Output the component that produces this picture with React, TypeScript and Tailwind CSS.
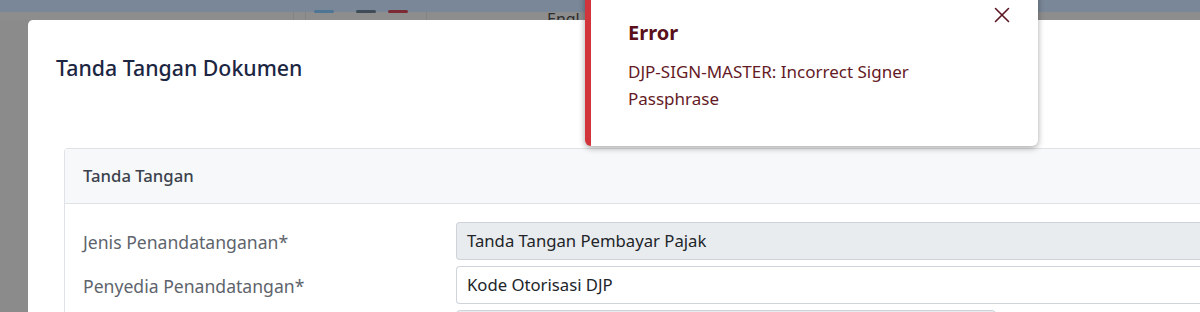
import React from 'react';

const font = { fontFamily: '"Noto Sans", "Open Sans", sans-serif' };

function FormRow({ label, value, disabled }: { label: string; value: string; disabled?: boolean }) {
  return (
    <div className="flex items-center">
      <label className="w-[373px] shrink-0 pt-[3px] text-[17.6px] text-[#5e646c]">{label}</label>
      <div
        className={`flex h-[38px] flex-1 items-center rounded-l-[4px] border border-r-0 border-[#ced4da] pl-[10px] text-[16.7px] text-[#212529] ${
          disabled ? 'bg-[#e9ecef]' : 'bg-white'
        }`}
      >
        {value}
      </div>
    </div>
  );
}

export default function App() {
  return (
    <div className="relative h-[312px] w-[1200px] overflow-hidden bg-[#8b8b8b]" style={font}>
      {/* dimmed page behind the modal */}
      <div className="h-[12px] bg-[#7a8798]" />
      <div className="flex h-[8px] items-start bg-[#8d8d8d]">
        <div className="ml-[293px] h-[8px] w-px bg-[#838383]" />
        <div className="ml-[11px] h-[8px] w-px bg-[#838383]" />
        <div className="ml-[8px] mt-[-2px] h-[3px] w-[20px] rounded-full bg-[#4f7594]" />
        <div className="ml-[22px] mt-[-2px] h-[3px] w-[20px] rounded-full bg-[#3f4b57]" />
        <div className="ml-[12px] mt-[-2px] h-[3px] w-[20px] rounded-full bg-[#7c2b35]" />
        <div className="ml-[18px] h-[8px] w-px bg-[#838383]" />
        <span className="ml-[120px] mt-[-3px] text-[16px] leading-[20px] text-[#2d2d2d]">Engl</span>
      </div>

      {/* modal */}
      <div className="absolute left-[28px] top-[20px] h-[320px] w-[1200px] rounded-tl-[5px] bg-white">
        <div className="px-[28px] pt-[34px]">
          <h2 className="text-[21.3px] font-medium leading-[28px] text-[#1c2642]">Tanda Tangan Dokumen</h2>
        </div>
        <div className="ml-[36px] mt-[66px] rounded-tl-[4px] border border-r-0 border-[#dfe2e6]">
          <div className="flex h-[55px] items-center border-b border-[#dfe2e6] bg-[#f7f8fa] px-[18px]">
            <span className="text-[16.7px] font-medium text-[#3b424c]">Tanda Tangan</span>
          </div>
          <div className="flex flex-col gap-[6px] pl-[18px] pt-[18px]">
            <FormRow label="Jenis Penandatanganan*" value="Tanda Tangan Pembayar Pajak" disabled />
            <FormRow label="Penyedia Penandatangan*" value="Kode Otorisasi DJP" />
            <div className="flex">
              <div className="w-[373px] shrink-0" />
              <div className="h-[38px] w-[540px] rounded-[4px] border border-[#ced4da] bg-[#e9ecef]" />
            </div>
          </div>
        </div>
      </div>

      {/* error toast */}
      <div className="absolute left-[585px] top-[-10px] h-[156px] w-[453px] rounded-b-[6px] border-l-[6px] border-[#d1343b] bg-white shadow-[0_2px_6px_rgba(0,0,0,0.35)]">
        <div className="flex items-start justify-between pl-[37px] pr-[28px] pt-[17px]">
          <div className="pt-[11px]">
            <div className="text-[20px] font-bold leading-[30px] text-[#5a0f1b]">Error</div>
            <p className="mt-[10px] text-[17px] leading-[27px] text-[#641a25]">
              DJP-SIGN-MASTER: Incorrect Signer
              <br />
              Passphrase
            </p>
          </div>
          <button className="text-[#5a1620]" aria-label="Close">
            <svg width="16" height="16" viewBox="0 0 16 16" fill="none" stroke="currentColor" strokeWidth="1.6" strokeLinecap="round">
              <path d="M1.5 1.5 L14.5 14.5 M14.5 1.5 L1.5 14.5" />
            </svg>
          </button>
        </div>
      </div>
    </div>
  );
}
